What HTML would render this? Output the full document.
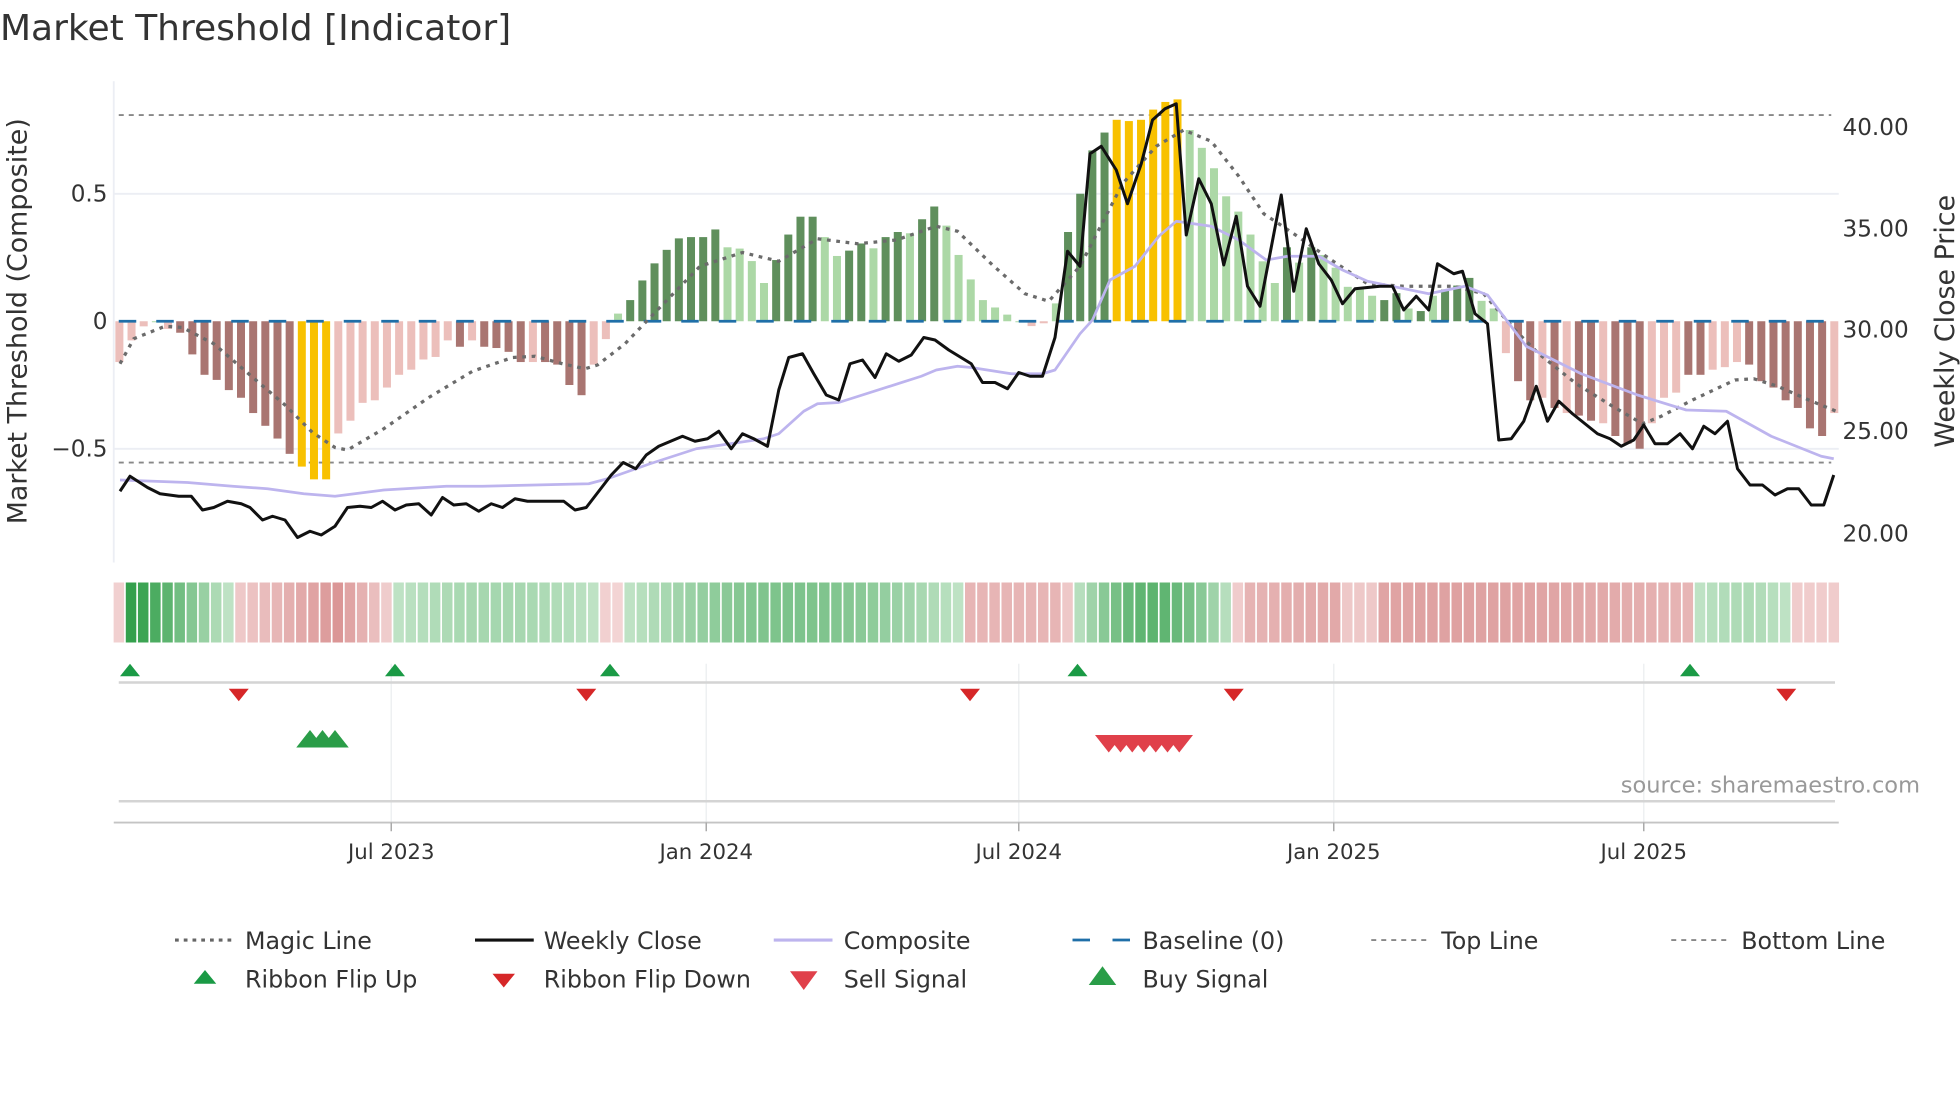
<!DOCTYPE html>
<html><head><meta charset="utf-8"><style>
html,body{margin:0;padding:0;background:#fff;}
svg{display:block;font-family:"DejaVu Sans","Liberation Sans",sans-serif;}
</style></head><body>
<svg id="s" width="1960" height="1102" viewBox="0 0 1568 881.6" xmlns="http://www.w3.org/2000/svg">
<rect width="1568" height="882" fill="#fff"/>
<text x="0" y="32" font-size="28.8" fill="#333">Market Threshold [Indicator]</text>
<line x1="91" y1="65" x2="91" y2="450" stroke="#eceef4" stroke-width="1.5"/>
<line x1="91" y1="155" x2="1471" y2="155" stroke="#eceef4" stroke-width="1.5"/>
<line x1="91" y1="359" x2="1471" y2="359" stroke="#eceef4" stroke-width="1.5"/>
<line x1="95" y1="92" x2="1465" y2="92" stroke="#888" stroke-width="1.5" stroke-dasharray="4,4"/>
<line x1="95" y1="370" x2="1465" y2="370" stroke="#888" stroke-width="1.5" stroke-dasharray="4,4"/>
<g id="bars"></g>
<line x1="95" y1="257" x2="1468" y2="257" stroke="#1f6fa8" stroke-width="2.2" stroke-dasharray="14,16"/>
<g id="lines"></g>
<g font-size="18.5" fill="#333">
<text x="86" y="161" text-anchor="end">0.5</text>
<text x="86" y="263" text-anchor="end">0</text>
<text x="86" y="365" text-anchor="end">−0.5</text>
<text x="1474" y="108">40.00</text>
<text x="1474" y="189">35.00</text>
<text x="1474" y="270">30.00</text>
<text x="1474" y="351">25.00</text>
<text x="1474" y="433">20.00</text>
</g>
<text transform="translate(21,257) rotate(-90)" font-size="21.5" fill="#333" text-anchor="middle">Market Threshold (Composite)</text>
<text transform="translate(1563,257) rotate(-90)" font-size="21.5" fill="#333" text-anchor="middle">Weekly Close Price</text>
<g id="ribbon"></g>
<g stroke="#eef0f2" stroke-width="1.2">
<line x1="313" y1="531" x2="313" y2="658"/><line x1="565" y1="531" x2="565" y2="658"/><line x1="815" y1="531" x2="815" y2="658"/><line x1="1067" y1="531" x2="1067" y2="658"/><line x1="1315" y1="531" x2="1315" y2="658"/>
</g>
<line x1="95" y1="546" x2="1468" y2="546" stroke="#d4d4d4" stroke-width="2"/>
<line x1="95" y1="641" x2="1468" y2="641" stroke="#d4d4d4" stroke-width="2"/>
<line x1="91" y1="658" x2="1471" y2="658" stroke="#c4c4c4" stroke-width="1.5"/>
<g stroke="#aaa" stroke-width="1.2">
<line x1="313" y1="658" x2="313" y2="665"/><line x1="565" y1="658" x2="565" y2="665"/><line x1="815" y1="658" x2="815" y2="665"/><line x1="1067" y1="658" x2="1067" y2="665"/><line x1="1315" y1="658" x2="1315" y2="665"/>
</g>
<g id="sig"></g>
<g font-size="17" fill="#333" text-anchor="middle">
<text x="313" y="687">Jul 2023</text><text x="565" y="687">Jan 2024</text><text x="815" y="687">Jul 2024</text><text x="1067" y="687">Jan 2025</text><text x="1315" y="687">Jul 2025</text>
</g>
<text x="1536" y="634" font-size="18" fill="#999" text-anchor="end">source: sharemaestro.com</text>
<g font-size="19" fill="#333">
<line x1="140" y1="752" x2="185" y2="752" stroke="#666" stroke-width="2.5" stroke-dasharray="3,4"/><text x="196" y="759">Magic Line</text>
<line x1="380" y1="752" x2="427" y2="752" stroke="#111" stroke-width="2.5"/><text x="435" y="759">Weekly Close</text>
<line x1="619" y1="752" x2="666" y2="752" stroke="#bdb4ee" stroke-width="2.5"/><text x="675" y="759">Composite</text>
<line x1="858" y1="752" x2="905" y2="752" stroke="#1f6fa8" stroke-width="2.2" stroke-dasharray="14,18"/><text x="914" y="759">Baseline (0)</text>
<line x1="1097" y1="752" x2="1143" y2="752" stroke="#888" stroke-width="1.5" stroke-dasharray="4,4"/><text x="1153" y="759">Top Line</text>
<line x1="1337" y1="752" x2="1383" y2="752" stroke="#888" stroke-width="1.5" stroke-dasharray="4,4"/><text x="1393" y="759">Bottom Line</text>
<polygon points="155,787 164,776 173,787" fill="#1a9a45"/><text x="196" y="790">Ribbon Flip Up</text>
<polygon points="394,779 403,790 412,779" fill="#d62728"/><text x="435" y="790">Ribbon Flip Down</text>
<polygon points="632,777 643,792 654,777" fill="#e0404a"/><text x="675" y="790">Sell Signal</text>
<polygon points="871,788 882,773 893,788" fill="#2a9d48"/><text x="914" y="790">Buy Signal</text>
</g>
</svg>
<script>
var NS="http://www.w3.org/2000/svg";
function el(p,t,a){var e=document.createElementNS(NS,t);for(var k in a)e.setAttribute(k,a[k]);p.appendChild(e);return e;}
var v=[[-0.16,'L'],[-0.075,'L'],[-0.02,'L'],[0,'L'],[-0.03,'L'],[-0.045,'D'],[-0.13,'D'],[-0.21,'D'],[-0.23,'D'],[-0.27,'D'],[-0.3,'D'],[-0.36,'D'],[-0.41,'D'],[-0.46,'D'],[-0.52,'D'],[-0.57,'Y'],[-0.62,'Y'],[-0.62,'Y'],[-0.44,'L'],[-0.39,'L'],[-0.32,'L'],[-0.31,'L'],[-0.26,'L'],[-0.21,'L'],[-0.19,'L'],[-0.15,'L'],[-0.14,'L'],[-0.075,'L'],[-0.1,'D'],[-0.075,'L'],[-0.1,'D'],[-0.105,'D'],[-0.12,'D'],[-0.16,'D'],[-0.16,'L'],[-0.16,'D'],[-0.17,'D'],[-0.25,'D'],[-0.29,'D'],[-0.17,'L'],[-0.07,'L'],
[0.03,'L'],[0.083,'D'],[0.16,'D'],[0.227,'D'],[0.28,'D'],[0.325,'D'],[0.33,'D'],[0.33,'D'],[0.36,'D'],[0.29,'L'],[0.285,'L'],[0.236,'L'],[0.15,'L'],[0.24,'D'],[0.34,'D'],[0.41,'D'],[0.41,'D'],[0.33,'L'],[0.256,'L'],[0.277,'D'],[0.305,'D'],[0.286,'L'],[0.33,'D'],[0.35,'D'],[0.345,'L'],[0.40,'D'],[0.45,'D'],[0.375,'L'],[0.26,'L'],[0.164,'L'],[0.083,'L'],[0.054,'L'],[0.026,'L'],[0,'L'],[-0.019,'L'],[-0.008,'L'],[0.07,'L'],[0.35,'D'],[0.5,'D'],[0.67,'D'],[0.74,'D'],
[0.79,'Y'],[0.785,'Y'],[0.79,'Y'],[0.83,'Y'],[0.86,'Y'],[0.87,'Y'],[0.75,'L'],[0.68,'L'],[0.60,'L'],[0.49,'L'],[0.43,'L'],[0.34,'L'],[0.235,'L'],[0.15,'L'],[0.29,'D'],[0.23,'L'],[0.29,'D'],[0.26,'L'],[0.21,'L'],[0.135,'L'],[0.13,'L'],[0.1,'L'],[0.083,'D'],[0.11,'D'],[0.05,'L'],[0.04,'D'],[0.1,'L'],[0.125,'D'],[0.14,'D'],[0.17,'D'],[0.08,'L'],[0.05,'L'],
[-0.125,'L'],[-0.235,'D'],[-0.31,'D'],[-0.3,'L'],[-0.34,'D'],[-0.36,'L'],[-0.37,'D'],[-0.39,'D'],[-0.4,'L'],[-0.45,'D'],[-0.48,'D'],[-0.5,'D'],[-0.4,'L'],[-0.3,'L'],[-0.28,'L'],[-0.21,'D'],[-0.21,'D'],[-0.19,'L'],[-0.18,'L'],[-0.16,'L'],[-0.17,'D'],[-0.235,'D'],[-0.26,'D'],[-0.31,'D'],[-0.34,'D'],[-0.42,'D'],[-0.45,'D'],[-0.36,'L']];
var P=9.73,X0=95.5,bars=document.getElementById('bars');
v.forEach(function(d,i){var val=d[0],t=d[1];var c;
 if(t=='Y')c='#f8c100';else if(val>=0)c=(t=='D'?'#5f8f5c':'#acd8a6');else c=(t=='D'?'#a97571':'#ecbfbb');
 var y0=257,y1=257-val*204;var x=X0+i*P-3.2;
 el(bars,'rect',{x:x,y:Math.min(y0,y1),width:6.4,height:Math.max(Math.abs(y1-y0),0.8),fill:c});});
function mix(a,b,t){var r=[];for(var k=0;k<3;k++)r.push(Math.round(a[k]+(b[k]-a[k])*t));return 'rgb('+r.join(',')+')';}
var G0=[214,238,217],G1=[52,160,76],R0=[244,216,216],R1=[214,138,138];
var rib=[[0,'r',0.1],[1,'g',1],[2,'g',0.95],[3,'g',0.85],[4,'g',0.75],[5,'g',0.62],[6,'g',0.5],[7,'g',0.38],[8,'g',0.26],[9,'g',0.15]];
for(var i=10;i<=22;i++){var t=i<=18?0.2+(i-10)*0.08:0.84-(i-18)*0.17;rib.push([i,'r',t]);}
for(var i=23;i<=39;i++)rib.push([i,'g',0.15+0.15*Math.sin((i-23)/16*Math.PI)]);
rib.push([40,'r',0.1]);rib.push([41,'r',0.05]);
for(var i=42;i<=69;i++)rib.push([i,'g',0.15+0.4*Math.sin((i-42)/27*Math.PI)]);
for(var i=70;i<=78;i++)rib.push([i,'r',i==78?0.2:0.45]);
for(var i=79;i<=91;i++)rib.push([i,'g',0.2+0.55*Math.sin((i-79)/12*Math.PI)]);
for(var i=92;i<=129;i++){var t=0.45+0.25*Math.sin((i-92)/37*Math.PI);if(i==92)t=0.15;if(i>=101&&i<=103)t=0.2;rib.push([i,'r',t]);}
for(var i=130;i<=137;i++)rib.push([i,'g',0.15+0.1*Math.sin((i-130)/7*Math.PI)]);
for(var i=138;i<=141;i++)rib.push([i,'r',0.15]);
var rg=document.getElementById('ribbon');
rib.forEach(function(d){var c=d[1]=='g'?mix(G0,G1,d[2]):mix(R0,R1,d[2]);el(rg,'rect',{x:X0+d[0]*P-4.6,y:466,width:8.4,height:48,fill:c});});
var lg=document.getElementById('lines');
function pl(pts,a){a.points=pts.map(function(p){return p.join(',')}).join(' ');a.fill='none';a['stroke-linejoin']='round';el(lg,'polyline',a);}
var magic=[[96,291],[107,271],[132,261],[146,262],[171,275],[200,300],[228,324],[250,346],[268,358],[278,360],[307,343],[343,318],[378,297],[410,286],[428,285],[450,291],[468,295],[478,292],[500,275],[523,251],[560,213],[594,202],[623,209],[654,191],[686,195],[717,192],[749,181],[766,185],[794,212],[820,235],[839,241],[864,213],[898,147],[925,117],[947,104],[969,113],[991,141],[1011,171],[1035,187],[1065,208],[1094,227],[1123,229],[1163,229],[1187,235],[1212,264],[1231,283],[1261,307],[1290,325],[1314,339],[1329,333],[1354,320],[1388,304],[1403,303],[1422,309],[1447,320],[1469,329]];
var comp=[[96,384],[150,386],[186,389],[214,391],[243,395],[268,397],[307,392],[357,389],[386,389],[428,388],[471,387],[486,383],[520,371],[557,359],[611,351],[623,347],[643,329],[654,323],[671,322],[737,301],[749,296],[766,293],[777,294],[809,299],[834,299],[844,296],[864,267],[874,256],[888,224],[908,213],[927,189],[941,177],[969,181],[991,192],[1013,208],[1030,205],[1055,205],[1074,216],[1094,225],[1143,235],[1172,229],[1190,236],[1221,277],[1265,299],[1310,316],[1349,328],[1381,329],[1417,349],[1437,357],[1457,365],[1467,367]];
var close=[[96,393],[104,381],[118,390],[128,395],[143,397],[153,397],[162,408],[171,406],[182,401],[193,403],[200,406],[210,416],[218,413],[228,416],[238,430],[248,425],[257,428],[268,421],[278,406],[288,405],[297,406],[306,401],[316,408],[325,404],[335,403],[345,412],[354,398],[363,404],[373,403],[383,409],[393,403],[402,406],[412,399],[422,401],[451,401],[460,408],[469,406],[479,393],[489,380],[498.6,370],[508.6,375],[517,364],[527,357],[546,349],[556,353],[566,351],[575,345],[585,359],[594,347],[603,351],[614,357],[623,312],[631,286],[642,283],[651,299],[661,316],[671,320],[680,291],[690,288],[700,302],[709,283],[719,289],[729,284],[739,270],[748,272],[759,280],[777,291],[786,306],[796,306],[806,311],[815,298],[824,301],[834,301],[844,270],[854,201],[864,213],[872,123],[881,117],[893,136],[902,163],[913,131],[922,96],[932,87],[941,83],[949,188],[959,143],[969,163],[979,212],[989,173],[998,229],[1008,245],[1025,156],[1035,233],[1045,183],[1055,211],[1065,224],[1074,243],[1084,231],[1104,229],[1114,229],[1123,248],[1133,237],[1143,248],[1150,211],[1163,219],[1170,217],[1180,251],[1190,259],[1199,352],[1209,351],[1219,337],[1229,309],[1238,337],[1247,321],[1258,331],[1268,339],[1278,347],[1288,351],[1297,357],[1307,352],[1315,340],[1324,355],[1334,355],[1344,347],[1354,359],[1363,341],[1372,347],[1382,337],[1390,375],[1400,388],[1410,388],[1420,396],[1430,391],[1439,391],[1449,404],[1459,404],[1467,380]];
pl(magic,{stroke:'#6b6b6b','stroke-width':2.6,'stroke-dasharray':'3,4.5'});
pl(comp,{stroke:'#bdb4ee','stroke-width':2.2});
pl(close,{stroke:'#111','stroke-width':2.4});
var sg=document.getElementById('sig');
function up(x,y,w,h,c){el(sg,'polygon',{points:(x-w/2)+','+(y+h)+' '+x+','+y+' '+(x+w/2)+','+(y+h),fill:c});}
function dn(x,y,w,h,c){el(sg,'polygon',{points:(x-w/2)+','+y+' '+x+','+(y+h)+' '+(x+w/2)+','+y,fill:c});}
[104,316,488,862,1352].forEach(function(x){up(x,531,16,10,'#1a9a45');});
[191,469,776,987,1429].forEach(function(x){dn(x,551,16,10,'#d62728');});
[248,258,268].forEach(function(x){up(x,584,22,14,'#2a9d48');});
for(var k=0;k<7;k++)dn(887+k*9.4,588,22,14,'#e0404a');
</script>
</body></html>
